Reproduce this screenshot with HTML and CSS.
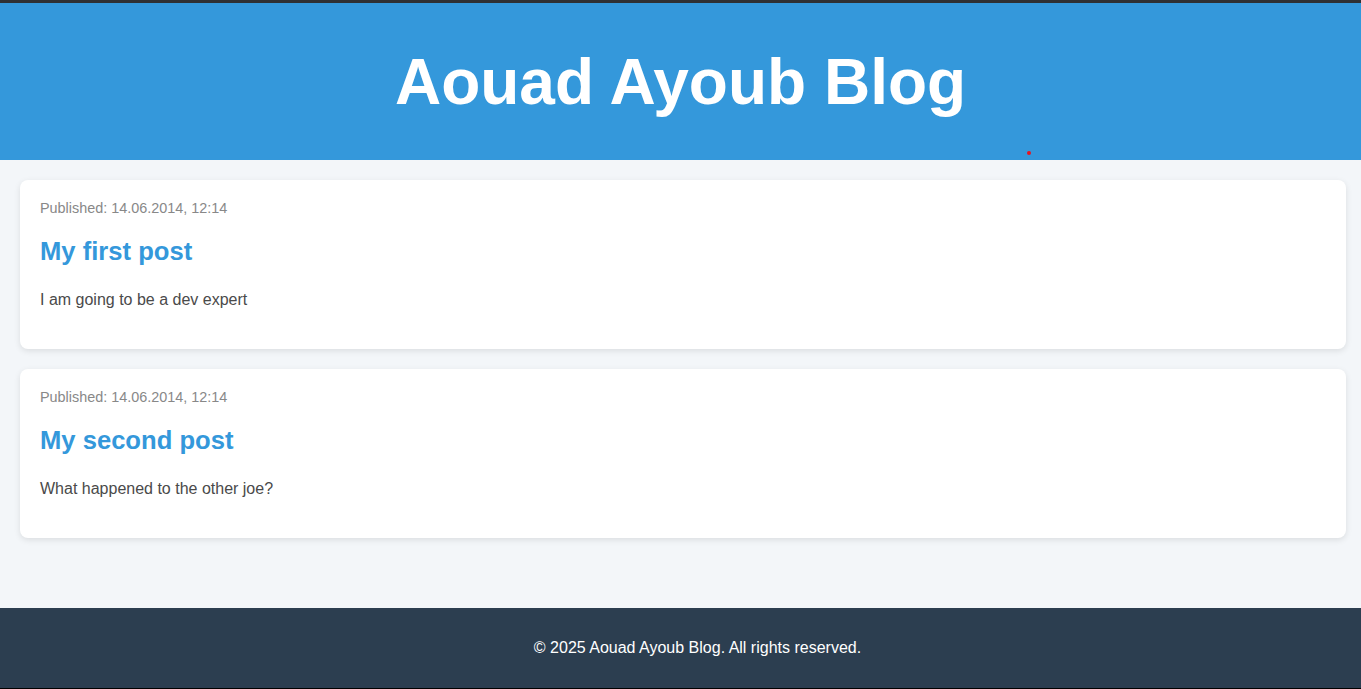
FILE: index.html
```html
<!DOCTYPE html>
<html lang="en">
<head>
<meta charset="utf-8">
<title>Aouad Ayoub Blog</title>
<link rel="stylesheet" href="styles.css">
</head>
<body>
<header class="site-header">
  <h1 class="site-title">Aouad Ayoub Blog</h1>
  <span class="dot"></span>
</header>
<main class="posts">
  <article class="post">
    <div class="post-meta">Published: 14.06.2014, 12:14</div>
    <h2 class="post-title">My first post</h2>
    <p class="post-body">I am going to be a dev expert</p>
  </article>
  <article class="post">
    <div class="post-meta">Published: 14.06.2014, 12:14</div>
    <h2 class="post-title">My second post</h2>
    <p class="post-body">What happened to the other joe?</p>
  </article>
</main>
<footer class="site-footer">
  <p class="copyright">© 2025 Aouad Ayoub Blog. All rights reserved.</p>
</footer>
</body>
</html>
```
FILE: styles.css
```css
html, body {
  margin: 0;
  padding: 0;
}
body {
  font-family: "Liberation Sans", Arial, sans-serif;
  background: #f3f6f9;
  color: #444;
  border-top: 3px solid #2f3033;
  border-bottom: 1px solid #000;
  min-height: 685px;
  display: flex;
  flex-direction: column;
}
.site-header {
  position: relative;
  background: #3498db;
  color: #fff;
  height: 157px;
  display: flex;
  align-items: center;
  justify-content: center;
}
.site-title {
  margin: 0;
  font-size: 64px;
  line-height: 74px;
  font-weight: bold;
}
.dot {
  position: absolute;
  left: 1027px;
  top: 148px;
  width: 4px;
  height: 4px;
  border-radius: 50%;
  background: #e8141f;
}
.posts {
  padding: 20px 15px 70px 20px;
  display: flex;
  flex-direction: column;
  gap: 20px;
  flex: 1;
}
.post {
  background: #fff;
  border-radius: 8px;
  box-shadow: 0 2px 6px rgba(0, 0, 0, 0.1);
  padding: 20px;
}
.post-meta {
  font-size: 14.4px;
  line-height: 16px;
  color: #888;
}
.post-title {
  margin: 19px 0 24px;
  font-size: 25.6px;
  line-height: 32px;
  color: #3498db;
}
.post-body {
  margin: 0 0 20px;
  font-size: 16px;
  line-height: 18px;
  color: #4a4a4a;
}
.site-footer {
  background: #2c3e50;
  color: #fff;
  height: 80px;
  padding-left: 34px;
  display: flex;
  align-items: center;
  justify-content: center;
}
.copyright {
  margin: 0;
  font-size: 16px;
  line-height: 18px;
}
```
